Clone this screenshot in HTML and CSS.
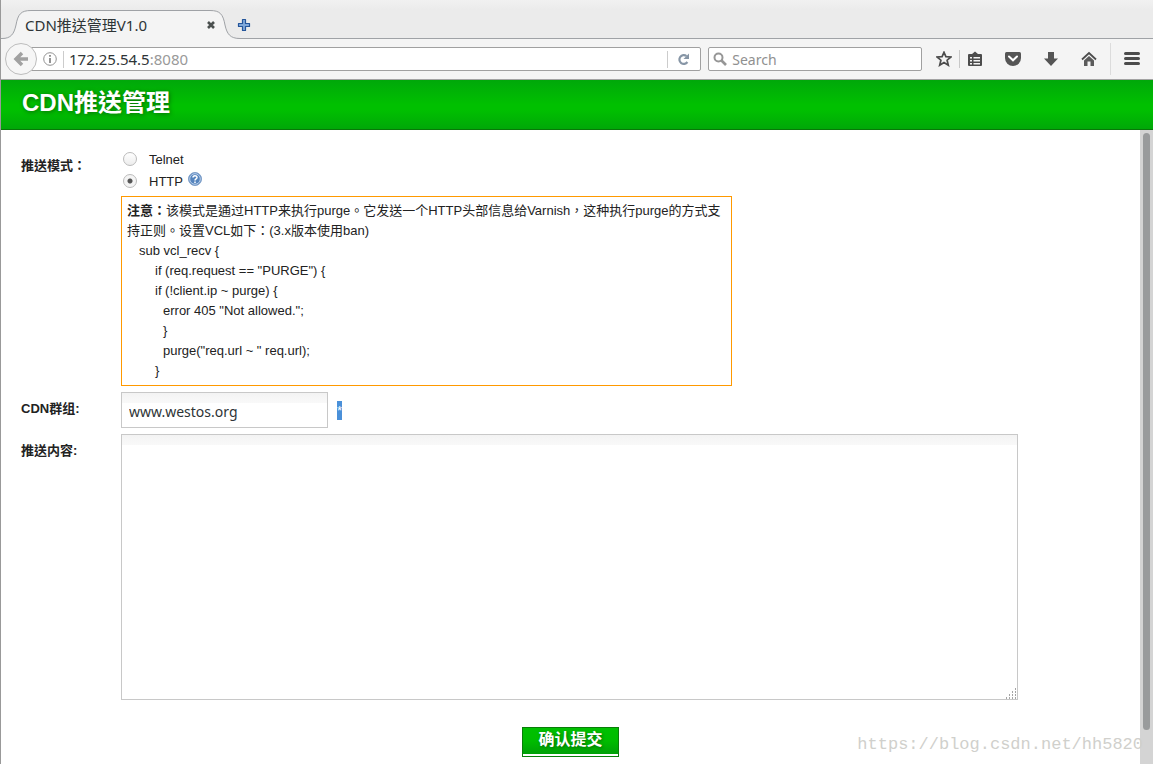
FILE: index.html
```html
<!DOCTYPE html>
<html lang="zh-Hant">
<head>
    <meta charset="UTF-8">
    <meta name="viewport" content="width=device-width, initial-scale=1.0">
    <title>CDN推送管理V1.0</title>
    <link rel="stylesheet" href="styles.css">
</head>
<body>

    <div class="tab-bar">
        <div class="tab">
            <svg class="tab-shape" width="238" height="29" viewBox="0 0 238 29">
                <path d="M0 29V28.500C9 28.500 12 24 14 15C16 4 19 .5 29 .5H208C218 .5 221 4 223 15C225 24 228 28.500 238 28.500V29Z" fill="#f4f4f4"/>
                <path d="M0 28.500C9 28.500 12 24 14 15C16 4 19 .5 29 .5H208C218 .5 221 4 223 15C225 24 228 28.500 238 28.500" fill="none" stroke="#9fa2a6"/>
            </svg>
            <span class="tab-title">CDN推送管理V1.0</span>
            <button class="icon-button" aria-label="Close tab">
                <svg width="10" height="10" viewBox="0 0 10 10"><path d="M2 2L8 8M8 2L2 8" stroke="#4b504f" stroke-width="2.600"/></svg>
            </button>
        </div>
        <button class="icon-button new-tab" aria-label="New tab">
            <svg width="14" height="14" viewBox="0 0 14 14"><path d="M5.500 1.500H8.500V5.500H12.500V8.500H8.500V12.500H5.500V8.500H1.500V5.500H5.500Z" fill="#7fa8da" stroke="#24559a" stroke-width="1.200" stroke-linejoin="round"/></svg>
        </button>
    </div>

    <div class="toolbar">
        <button class="back" aria-label="Back">
            <svg width="16" height="16" viewBox="0 0 16 16"><path d="M9 2L3 8L9 14M3.500 8H15" fill="none" stroke="#a1a1a1" stroke-width="3.500"/></svg>
        </button>
        <div class="url-bar">
            <svg width="14" height="14" viewBox="0 0 14 14"><circle cx="7" cy="7" r="6.300" fill="none" stroke="#929292"/><path d="M7 6V11M7 3V4.700" stroke="#808080" stroke-width="1.700"/></svg>
            <span class="url"><span class="host">172.25.54.5</span>:8080</span>
            <button class="icon-button reload" aria-label="Reload">
                <svg width="13" height="13" viewBox="0 0 13 13"><path d="M9.500 3A4.400 4.400 0 1 0 10.400 9" fill="none" stroke="#8796a6" stroke-width="2.200"/><path d="M12 .5V6H6.500Z" fill="#8796a6"/></svg>
            </button>
        </div>
        <div class="search-bar">
            <svg width="15" height="15" viewBox="0 0 15 15"><circle cx="5.500" cy="5.500" r="4" fill="none" stroke="#969696" stroke-width="2"/><path d="M8.500 8.500L13 13" stroke="#969696" stroke-width="2.600"/></svg>
            <input type="text" placeholder="Search" aria-label="Search">
        </div>
        <div class="tools">
            <button class="icon-button" aria-label="Bookmark">
                <svg width="16" height="16" viewBox="0 0 16 16"><path d="M8 1.300L9.900 5.700L14.900 6L11.100 9.200L12.300 14.200L8 11.500L3.700 14.200L4.900 9.200L1.100 6L6.100 5.700Z" fill="none" stroke="#4c4c4c" stroke-width="1.700"/></svg>
            </button>
            <span class="separator"></span>
            <button class="icon-button" aria-label="Bookmarks list">
                <svg width="16" height="16" viewBox="0 0 16 16"><path d="M2 3H5L8 .5L11 3H14Q15 3 15 4V14Q15 15 14 15H2Q1 15 1 14V4Q1 3 2 3Z" fill="#4c4c4c"/><path d="M3 6H5V7.500H3ZM6.500 6H13V7.500H6.500ZM3 9H5V10.500H3ZM6.500 9H13V10.500H6.500ZM3 12H5V13.500H3ZM6.500 12H13V13.500H6.500Z" fill="#f4f4f4"/></svg>
            </button>
            <button class="icon-button" aria-label="Pocket">
                <svg width="16" height="16" viewBox="0 0 16 16"><path d="M1.500 1H14.500Q16 1 16 2.500V7A8 8 0 0 1 0 7V2.500Q0 1 1.500 1Z" fill="#555"/><path d="M4 5.500L8 9.300L12 5.500" fill="none" stroke="#fff" stroke-width="2" stroke-linecap="round"/></svg>
            </button>
            <button class="icon-button" aria-label="Downloads">
                <svg width="16" height="16" viewBox="0 0 16 16"><path d="M5 1H11V7.500H15L8 15L1 7.500H5Z" fill="#555"/></svg>
            </button>
            <button class="icon-button" aria-label="Home">
                <svg width="16" height="16" viewBox="0 0 16 16"><path d="M1 8.500L8 2L15 8.500" fill="none" stroke="#4c4c4c" stroke-width="1.800"/><path d="M3 9.500L8 5L13 9.500V15H9.500V10.500H6.500V15H3Z" fill="#5b5b5b"/></svg>
            </button>
            <span class="separator tall"></span>
            <button class="icon-button" aria-label="Menu">
                <svg width="16" height="16" viewBox="0 0 16 16"><path d="M1.500 2.500H14.500M1.500 7.500H14.500M1.500 12.500H14.500" stroke="#4c4c4c" stroke-width="3" stroke-linecap="round"/></svg>
            </button>
        </div>
    </div>

    <div class="header">
        <h1>CDN推送管理</h1>
    </div>

    <div class="page">
        <form class="push-form">
            <div class="row">
                <div class="label mode-label" id="mode-label">推送模式：</div>
                <div class="field" role="radiogroup" aria-labelledby="mode-label">
                    <div class="option">
                        <input type="radio" name="mode" id="telnet">
                        <label for="telnet">Telnet</label>
                    </div>
                    <div class="option">
                        <input type="radio" name="mode" id="http" checked>
                        <label for="http">HTTP</label>
                        <svg class="help" width="14" height="14" viewBox="0 0 14 14"><circle cx="7" cy="7" r="6.500" fill="#5584bd" stroke="#7f9fc8"/><circle cx="7" cy="7" r="5.300" fill="none" stroke="#bdd2ec"/><path d="M5 5.500C5 3.200 9 3.200 9 5.400C9 6.900 7 6.800 7 8.500M7 9.500V11" fill="none" stroke="#fff" stroke-width="1.500"/></svg>
                    </div>
                    <div class="note">
                        <p><b>注意：</b>该模式是通过HTTP来执行purge。它发送一个HTTP头部信息给Varnish，这种执行purge的方式支持正则。设置VCL如下：(3.x版本使用ban)</p>
                        <p class="indent-1">sub vcl_recv {</p>
                        <p class="indent-2">if (req.request == "PURGE") {</p>
                        <p class="indent-2">if (!client.ip ~ purge) {</p>
                        <p class="indent-3">error 405 "Not allowed.";</p>
                        <p class="indent-3">}</p>
                        <p class="indent-3">purge("req.url ~ " req.url);</p>
                        <p class="indent-2">}</p>
                    </div>
                </div>
            </div>
            <div class="row">
                <label class="label" for="group">CDN群组:</label>
                <div class="field group-field">
                    <input type="text" id="group" value="www.westos.org">
                    <span class="required">*</span>
                </div>
            </div>
            <div class="row">
                <label class="label" for="content">推送内容:</label>
                <div class="field">
                    <textarea id="content"></textarea>
                </div>
            </div>
            <div class="actions">
                <button type="button" class="submit"><span>确认提交</span></button>
            </div>
        </form>
        <div class="scrollbar"><div class="thumb"></div></div>
    </div>

    <div class="watermark">https://blog.csdn.net/hh5820</div>

</body>
</html>
```

FILE: styles.css
```css
* {
    box-sizing: border-box;
}

body {
    margin: 0;
    height: 100vh;
    display: flex;
    flex-direction: column;
    overflow: hidden;
    border-left: 1px solid #999;
    background: #fff;
    color: #222;
    font-family: "Liberation Sans", "Noto Sans CJK TC", sans-serif;
    font-size: 13px;
}

svg {
    display: block;
    flex: none;
}

.icon-button {
    display: block;
    padding: 0;
    border: none;
    background: none;
}

/* Browser tabs */
.tab-bar {
    display: flex;
    align-items: flex-end;
    height: 39px;
    flex: none;
    padding-left: 1px;
    background: linear-gradient(to bottom, #f1f1f1, #ebebeb 10px);
    border-bottom: 1px solid #9fa2a6;
}

.tab {
    position: relative;
    display: flex;
    align-items: center;
    justify-content: space-between;
    width: 238px;
    height: 29px;
    margin-bottom: -1px;
    padding: 0 24px 0 23px;
}

.tab-shape {
    position: absolute;
    left: 0;
    top: 0;
}

.tab-title,
.tab .icon-button {
    position: relative;
}

.tab-title {
    color: #2e3436;
    font: 15px "Noto Sans", "Noto Sans CJK TC", sans-serif;
}

.new-tab {
    margin: 0 0 6px -3px;
}

/* Address bar */
.toolbar {
    display: flex;
    align-items: center;
    height: 41px;
    flex: none;
    padding: 0 13px 0 4px;
    background: #f4f4f4;
    border-bottom: 1px solid #a3a3a3;
}

.back {
    display: flex;
    align-items: center;
    justify-content: center;
    width: 32px;
    height: 32px;
    padding: 0;
    flex: none;
    border: 1px solid #bdbdbd;
    border-radius: 50%;
    background: #f6f6f6;
    z-index: 1;
}

.url-bar,
.search-bar {
    display: flex;
    align-items: center;
    height: 24px;
    border: 1px solid #a0a0a0;
    border-radius: 2px;
    background: #fff;
    font: 15px "Noto Sans", sans-serif;
}

.url-bar {
    flex: 674;
    margin-left: -7px;
    padding-left: 12px;
}

.url {
    flex: 1;
    margin-left: 6px;
    padding-left: 5px;
    border-left: 1px solid #ccc;
    color: #999;
    line-height: 17px;
}

.host {
    color: #2e3436;
}

.reload {
    padding: 2px 10px 2px 9px;
    border-left: 1px solid #ccc;
}

.search-bar {
    flex: 213;
    margin-left: 7px;
    padding-left: 4px;
}

.search-bar input {
    width: 100%;
    min-width: 0;
    margin-left: 4px;
    padding: 0;
    border: none;
    background: none;
    font: 14px "Noto Sans", sans-serif;
}

.search-bar input::placeholder {
    color: #909090;
}

.tools {
    display: flex;
    align-items: center;
    gap: 22px;
    margin-left: 14px;
}

.separator {
    width: 1px;
    height: 18px;
    margin: 0 -15px;
    background: #c8c8c8;
}

.separator.tall {
    height: 32px;
    margin: 0 -9px;
    background: #dcdcdc;
}

/* Page header */
.header {
    height: 50px;
    flex: none;
    padding: 6px 21px;
    background: linear-gradient(to bottom, #00a80a, #00c000 50%, #00c000 60%, #00a808);
    border-bottom: 1px solid #087808;
}

h1 {
    margin: 0;
    color: #fff;
    font-size: 24px;
    line-height: 34px;
    text-shadow: 1px 1px 4px #076907;
}

/* Form */
.page {
    display: flex;
    flex: 1;
    min-height: 0;
}

.push-form {
    flex: 1;
    padding: 18px 0 0 20px;
}

.row {
    display: flex;
    margin-bottom: 6px;
}

.label {
    width: 100px;
    flex: none;
    padding-top: 7px;
    font-weight: bold;
    line-height: 20px;
}

.mode-label {
    padding-top: 8px;
}

.field {
    flex: 1;
}

.option {
    display: flex;
    align-items: center;
    height: 22px;
}

.option label {
    margin: 0 5px 0 12px;
}

.option input {
    appearance: none;
    width: 14px;
    height: 14px;
    margin: 0 0 0 2px;
    border: 1px solid #bbb;
    border-radius: 50%;
    background: linear-gradient(to bottom, #fff, #ececec);
}

.option input:checked {
    background: radial-gradient(circle, #555 2px, #f4f4f4 3px);
}

.help {
    margin-bottom: 4px;
}

.note {
    width: 60%;
    margin-top: 4px;
    padding: 4px 5px;
    border: 1px solid #f90;
    line-height: 20px;
}

.note p {
    margin: 0;
}

.note .indent-1 {
    padding-left: 12px;
}

.note .indent-2 {
    padding-left: 28px;
}

.note .indent-3 {
    padding-left: 36px;
}

.group-field {
    display: flex;
    align-items: center;
}

.group-field input,
textarea {
    border: 1px solid #c8c8c8;
    background: linear-gradient(to bottom, #f3f3f3, #f9f9f9 10px, #fff 10px);
    color: #2e3436;
    font: 14px "Noto Sans", sans-serif;
}

.group-field input {
    width: 207px;
    height: 36px;
    padding: 3px 7px 0;
}

.required {
    margin-left: 9px;
    background: #4a90d9;
    color: #fff;
    line-height: 19px;
}

textarea {
    display: block;
    width: 88%;
    height: 266px;
}

/* Dotted corner grip */
textarea::-webkit-resizer {
    background: url("data:image/svg+xml,%3Csvg xmlns='http://www.w3.org/2000/svg' width='11' height='11'%3E%3Cpath d='M9 1h1M6 4h1M9 4h1M3 7h1M6 7h1M9 7h1M0 10h1M3 10h1M6 10h1M9 10h1' stroke='%23888' stroke-width='1.5'/%3E%3C/svg%3E") no-repeat right bottom;
}

.actions {
    margin-top: 27px;
    padding-right: 20px;
    text-align: center;
}

.submit {
    height: 30px;
    padding: 0 0 2px;
    border: 1px solid #087e08;
    background: #fff;
    color: #fff;
    font: bold 16px "Liberation Sans", "Noto Sans CJK TC", sans-serif;
}

.submit span {
    display: block;
    padding: 0 15px 2px;
    background: linear-gradient(to bottom, #00c000, #00bc00 50%, #00a008);
    line-height: 24px;
    text-shadow: 1px 1px 3px #076907;
}

.scrollbar {
    width: 13px;
    padding: 3px;
    background: #d4d4d4;
}

.thumb {
    height: 95%;
    border-radius: 4px;
    background: #999b9c;
}

.watermark {
    position: absolute;
    right: 10px;
    bottom: 10px;
    color: #d0d0cc;
    font: 17px "Liberation Mono", monospace;
}
```
